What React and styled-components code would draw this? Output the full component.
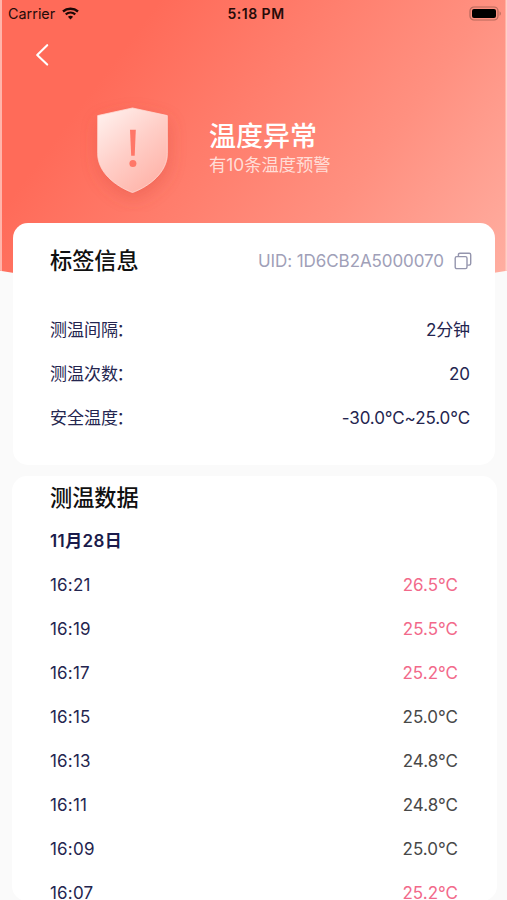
import React from "react";
import styled, { createGlobalStyle } from "styled-components";

const Global = createGlobalStyle`
  * { box-sizing: border-box; }
  body {
    margin: 0;
    background: #fafafa;
    font-family: Inter, "Noto Sans CJK SC", sans-serif;
    -webkit-font-smoothing: antialiased;
  }
`;

const Screen = styled.div`
  width: 507px;
  height: 900px;
  overflow: hidden;
  display: flex;
  flex-direction: column;
  background: #fafafa;
`;

const Hero = styled.header`
  flex: none;
  height: 292px;
  margin-bottom: -69px;
  background:
    linear-gradient(90deg, #ffb4aa 1.5px, transparent 2px, transparent 505px, #ffd0c8 506px),
    linear-gradient(127deg, #ff6b59 0%, #ff6b59 22%, #ff9080 68%, #ffb0a3 100%);
  clip-path: circle(1600px at 50% -1309px);
`;

const StatusBar = styled.div`
  display: grid;
  grid-template-columns: 1fr auto 1fr;
  align-items: center;
  height: 26px;
  padding: 0 5px 0 8px;
  font-size: 14.4px;
  color: #260b09;
`;

const Carrier = styled.div`
  display: flex;
  align-items: center;
  gap: 7px;
`;

const Clock = styled.div`
  font-weight: 600;
  font-size: 14px;
  letter-spacing: 0.5px;
  padding-left: 2px;
`;

const Battery = styled.svg`
  justify-self: end;
`;

const NavBar = styled.nav`
  height: 56px;
  padding: 17px 0 0 34px;
`;

const BackButton = styled.button`
  display: block;
  border: 0;
  padding: 0;
  background: none;
  height: 24px;
`;

const Alert = styled.div`
  display: flex;
  align-items: flex-start;
  padding: 10px 0 0 73px;
`;

const AlertText = styled.div`
  padding: 28px 0 0 17px;
  color: #fff;
`;

const AlertTitle = styled.h1`
  margin: 0;
  font-size: 27px;
  line-height: 34px;
  font-weight: 500;
`;

const AlertNote = styled.p`
  margin: 0;
  font-size: 17.3px;
  line-height: 22px;
  color: #ffded8;
`;

const Card = styled.section`
  position: relative;
  flex: none;
  background: #fff;
  border-radius: 15px;
`;

const InfoCard = styled(Card)`
  height: 242px;
  margin: 0 12px 11px 13px;
  padding: 21px 25px 0 37px;
`;

const DataCard = styled(Card)`
  height: 425px;
  margin: 0 10px 0 12px;
  padding: 5px 39px 0 38px;
`;

const Row = styled.div`
  display: flex;
  align-items: center;
  justify-content: space-between;
  height: 44px;
  font-size: 17px;
  line-height: 24px;
  color: #24254f;
`;

const CardHead = styled(Row)`
  height: 34px;
  margin-bottom: 30px;
`;

const Title = styled.h2`
  margin: 0;
  font-size: 22.2px;
  line-height: 34px;
  font-weight: 500;
  color: #101010;
`;

const Uid = styled.div`
  display: flex;
  align-items: center;
  gap: 10px;
  margin-right: -2px;
  font-size: 17px;
  letter-spacing: -0.08px;
  color: #a0a0b8;
`;

const Label = styled.span`
  display: flex;
  padding-bottom: 1px;
`;

const Colon = styled.span`
  margin-left: -1.5px;
`;

const Value = styled.span`
  padding-bottom: ${(p) => (p.$cjk ? "1px" : "0")};
  letter-spacing: -0.1px;
`;

const DateLabel = styled.div`
  display: flex;
  align-items: center;
  height: 44px;
  margin: 4px 0 0;
  font-size: 17px;
  line-height: 24px;
  font-weight: 600;
  letter-spacing: 0.4px;
  color: #1a1b4b;
`;

const Time = styled.span`
  letter-spacing: 0.2px;
`;

const Temp = styled.span`
  color: ${(p) => (p.$alarm ? "#f2698a" : "#484848")};
`;

const settings = [
  { label: "测温间隔", value: "2分钟", cjk: true },
  { label: "测温次数", value: "20" },
  { label: "安全温度", value: "-30.0°C~25.0°C" },
];

const readings = [
  ["16:21", "26.5", true],
  ["16:19", "25.5", true],
  ["16:17", "25.2", true],
  ["16:15", "25.0", false],
  ["16:13", "24.8", false],
  ["16:11", "24.8", false],
  ["16:09", "25.0", false],
  ["16:07", "25.2", true],
];

const WifiIcon = () => (
  <svg width="17" height="13" viewBox="0 0 17 13" fill="none">
    <path d="M1 4.5C5.2.8 11.8.8 16 4.5" stroke="#1e0806" strokeWidth="2.4" />
    <path d="M3.7 7.4c2.8-2.4 6.8-2.4 9.6 0" stroke="#1e0806" strokeWidth="2.1" />
    <path d="M5.9 9.7c1.6-1.3 3.6-1.3 5.2 0L8.5 12.4Z" fill="#1e0806" />
  </svg>
);

const BatteryIcon = () => (
  <Battery width="33" height="15" viewBox="0 0 33 15">
    <rect x="1" y="1" width="28" height="13" rx="4" fill="none" stroke="#b5685b" strokeWidth="1.2" />
    <rect x="3" y="3" width="24" height="9" rx="2" fill="#000" />
    <path d="M30.6 5.2c1.6.7 1.6 3.9 0 4.6Z" fill="#b5685b" />
  </Battery>
);

const ShieldIcon = () => (
  <svg width="119" height="120" viewBox="0 0 119 120">
    <defs>
      <linearGradient id="shieldFill" x1="0.1" y1="0" x2="0.8" y2="1">
        <stop offset="0" stopColor="#fff1ee" />
        <stop offset="0.5" stopColor="#ffcec7" />
        <stop offset="1" stopColor="#ffb1a6" />
      </linearGradient>
      <filter id="shieldShadow" x="-50%" y="-50%" width="200%" height="200%">
        <feDropShadow dx="1" dy="6" stdDeviation="9" floodColor="#d94d3e" floodOpacity="0.38" />
      </filter>
    </defs>
    <path
      d="M59.5 16 94.3 23.6V61.5C94.3 80 77 94 59.5 100.5C42 94 24.7 80 24.7 61.5V23.6Z"
      fill="url(#shieldFill)"
      stroke="#ffd9d3"
      strokeWidth="0.8"
      filter="url(#shieldShadow)"
    />
    <path d="M57 37.8h5.8l-1.1 26h-3.5Z" fill="#ff7768" />
    <circle cx="59.9" cy="71.5" r="3.5" fill="#ff7768" />
  </svg>
);

const CopyIcon = () => (
  <svg width="18" height="18" viewBox="0 0 18 18" fill="none" stroke="#9495ad" strokeWidth="1.4">
    <rect x="1.2" y="4.6" width="11.8" height="12" rx="1.6" />
    <path d="M4.4 4.4V2.7c0-.9.6-1.5 1.5-1.5h9.3c.9 0 1.5.6 1.5 1.5v8.9c0 .9-.6 1.5-1.5 1.5h-2" />
  </svg>
);

export default function App() {
  return (
    <Screen>
      <Global />
      <Hero>
        <StatusBar>
          <Carrier>
            Carrier
            <WifiIcon />
          </Carrier>
          <Clock>5:18 PM</Clock>
          <BatteryIcon />
        </StatusBar>
        <NavBar>
          <BackButton aria-label="返回">
            <svg width="16" height="24" viewBox="0 0 16 24" fill="none">
              <path d="M13.2 2.2 3.2 12l10 9.6" stroke="#fff" strokeWidth="2.1" strokeLinecap="round" strokeLinejoin="round" />
            </svg>
          </BackButton>
        </NavBar>
        <Alert>
          <ShieldIcon />
          <AlertText>
            <AlertTitle>温度异常</AlertTitle>
            <AlertNote>有10条温度预警</AlertNote>
          </AlertText>
        </Alert>
      </Hero>
      <InfoCard>
        <CardHead>
          <Title>标签信息</Title>
          <Uid>
            UID: 1D6CB2A5000070
            <CopyIcon />
          </Uid>
        </CardHead>
        {settings.map(({ label, value, cjk }) => (
          <Row key={label}>
            <Label>
              {label}
              <Colon>：</Colon>
            </Label>
            <Value $cjk={cjk}>{value}</Value>
          </Row>
        ))}
      </InfoCard>
      <DataCard>
        <Title>测温数据</Title>
        <DateLabel>11月28日</DateLabel>
        {readings.map(([time, temp, alarm]) => (
          <Row key={time}>
            <Time>{time}</Time>
            <Temp $alarm={alarm}>{temp}°C</Temp>
          </Row>
        ))}
      </DataCard>
    </Screen>
  );
}
